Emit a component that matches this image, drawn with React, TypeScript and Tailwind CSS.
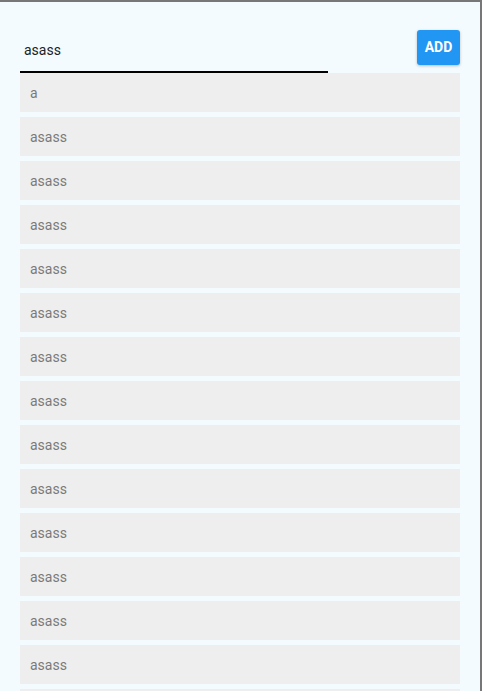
import React from "react";

const ITEMS = ["a", ...Array.from({ length: 15 }, () => "asass")];

export default function App() {
  return (
    <div
      className="w-[482px] h-[691px] overflow-hidden bg-[#f3fbff] border-t-2 border-r-2 border-[#777777] pl-[20px] pr-[20px]"
      style={{ fontFamily: "Roboto, 'Liberation Sans', sans-serif" }}
    >
      {/* Input row */}
      <div className="flex items-start pt-[28px]">
        <div className="mt-[2px] w-[308px] h-[41px] border-b-2 border-black flex items-center pl-[4px] pb-[3px]">
          <input
            className="w-full bg-transparent outline-none text-[14px] text-[#222]"
            defaultValue="asass"
          />
        </div>
        <div className="flex-1" />
        <button className="w-[43px] h-[35px] rounded-[3px] bg-[#2196f3] text-white text-[14px] font-bold shadow-[0_1px_3px_rgba(0,0,0,0.25)]">
          ADD
        </button>
      </div>

      {/* List */}
      <div className="flex flex-col gap-[5px]">
        {ITEMS.map((item, i) => (
          <div
            key={i}
            className="h-[39px] shrink-0 bg-[#eeeeee] flex items-center pl-[10px] pt-[2px] text-[14px] text-[#7a7a7a]"
          >
            {item}
          </div>
        ))}
      </div>
    </div>
  );
}
